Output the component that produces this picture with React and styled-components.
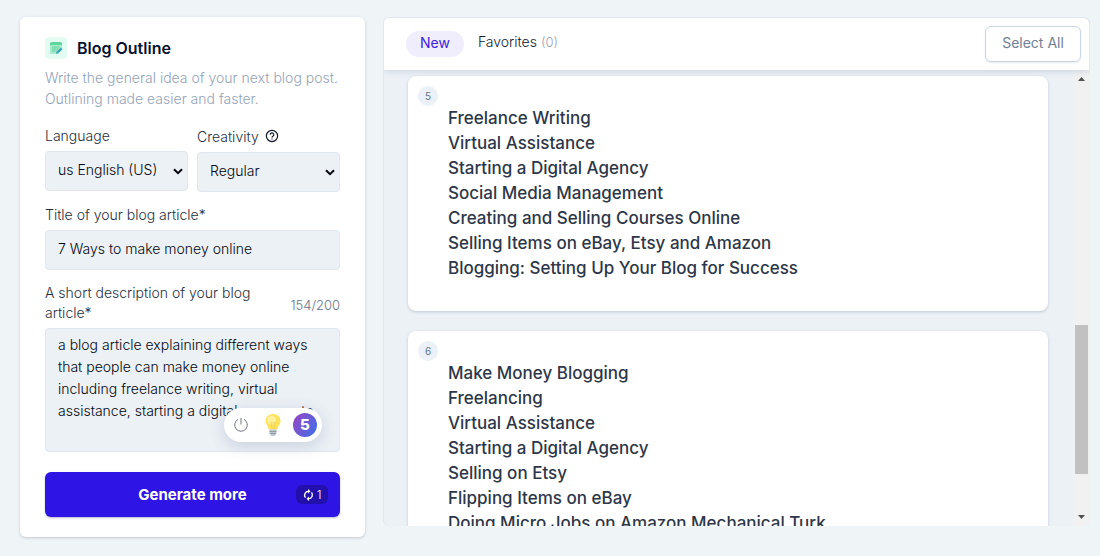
import React from "react";
import styled, { createGlobalStyle } from "styled-components";

const Global = createGlobalStyle`
  *, *::before, *::after { box-sizing: border-box; }
  body {
    margin: 0;
    background: #eff4f7;
    color: #030712;
    font-family: "Inter", "Liberation Sans", sans-serif;
    font-size: 14px;
    line-height: 20px;
  }
  button, input, select, textarea { font: inherit; color: inherit; margin: 0; }
  h1, h2, p, ul { margin: 0; padding: 0; }
`;

const Page = styled.main`
  display: grid;
  grid-template-columns: 345px minmax(0, 1fr);
  gap: 18px;
  align-items: start;
  padding: 17px 10px 19px 20px;
`;

const FormCard = styled.form`
  padding: 20px 25px;
  background: #fff;
  border-radius: 6px;
  box-shadow: 0 1px 3px rgba(30, 50, 80, 0.22);
`;

const TitleRow = styled.header`
  display: flex;
  align-items: center;
  gap: 10px;
  height: 22px;
`;

const ToolIcon = styled.svg`
  width: 22px;
  height: 22px;
`;

const Title = styled.h1`
  font-size: 16px;
  font-weight: 600;
  color: #07112e;
`;

const Intro = styled.p`
  margin-top: 8px;
  line-height: 21px;
  font-weight: 300;
  color: #94a3b8;
`;

const Columns = styled.div`
  display: grid;
  grid-template-columns: 1fr 1fr;
  gap: 9px;
  margin-top: 17px;
`;

const Field = styled.div`
  margin-top: ${(p) => (p.$spaced ? "13px" : "0")};
`;

const LabelRow = styled.div`
  display: flex;
  align-items: center;
  justify-content: space-between;
  gap: 24px;
  margin-bottom: 5px;
`;

const Label = styled.label`
  display: flex;
  align-items: center;
  gap: 6px;
  font-weight: 300;
  color: #27303f;
`;

const Counter = styled.span`
  padding-top: 4px;
  font-size: 13px;
  font-weight: 300;
  color: #64748b;
`;

const controlLook = `
  display: block;
  width: 100%;
  background: #ecf1f5;
  border: 1px solid #dfe6ed;
  border-radius: 4px;
  font-weight: 300;
  outline: none;
`;

const SelectBox = styled.div`
  display: grid;
  align-items: center;
`;

const Select = styled.select`
  ${controlLook}
  grid-area: 1 / 1;
  height: 40px;
  padding: 0 20px 2px 12px;
  appearance: none;
`;

const Chevron = styled.svg`
  grid-area: 1 / 1;
  justify-self: end;
  width: 10px;
  height: 7px;
  margin-right: 5px;
  pointer-events: none;
`;

const Input = styled.input`
  ${controlLook}
  height: 40px;
  padding: 0 12px 4px;
`;

const AreaWrap = styled.div`
  position: relative;
`;

const TextArea = styled.textarea`
  ${controlLook}
  height: 124px;
  padding: 5px 12px;
  line-height: 22px;
  resize: none;
  overflow: hidden;
`;

const Assistant = styled.div`
  position: absolute;
  right: 18px;
  bottom: 10px;
  display: flex;
  align-items: center;
  gap: 12px;
  width: 98px;
  height: 34px;
  padding-left: 9px;
  background: #fff;
  border-radius: 17px;
  box-shadow: 0 4px 16px rgba(60, 70, 130, 0.2);
`;

const Power = styled.svg`
  width: 16px;
  height: 16px;
  flex: none;
`;

const Bulb = styled.svg`
  width: 22px;
  height: 24px;
  flex: none;
`;

const Score = styled.span`
  display: grid;
  place-items: center;
  flex: none;
  width: 24px;
  height: 24px;
  margin-left: -2px;
  border-radius: 50%;
  background: linear-gradient(120deg, #9747c4 5%, #3f6fe8 95%);
  color: #fff;
  font-size: 15px;
  font-weight: 800;
`;

const Generate = styled.button`
  display: grid;
  grid-template-columns: 1fr auto 1fr;
  align-items: center;
  width: 100%;
  height: 45px;
  margin-top: 20px;
  padding: 0 12px;
  border: 0;
  border-radius: 6px;
  background: #2e15e6;
  box-shadow: 0 1px 2px rgba(20, 20, 80, 0.3);
  color: #fff;
  font-size: 15px;
  font-weight: 700;
`;

const GenerateText = styled.span`
  grid-column: 2;
`;

const Credits = styled.span`
  justify-self: end;
  display: flex;
  align-items: center;
  justify-content: center;
  gap: 3px;
  width: 32px;
  height: 19px;
  border-radius: 6px;
  background: #220fac;
  font-size: 12px;
  font-weight: 300;
`;

const Results = styled.section`
  display: flex;
  flex-direction: column;
  height: calc(100vh - 47px);
  border: 1px solid #e2e8ef;
  border-width: 1px 0 0 1px;
  border-radius: 6px;
  overflow: hidden;
  background: #ecf1f6;
`;

const Toolbar = styled.header`
  position: relative;
  display: flex;
  align-items: center;
  gap: 14px;
  flex: none;
  height: 52px;
  padding: 0 8px 0 22px;
  background: #fff;
  border-radius: 0 6px 0 0;
  border-right: 1px solid #e2e8ef;
  box-shadow: 0 1px 6px rgba(100, 125, 170, 0.28);
`;

const Tab = styled.button`
  height: 26px;
  padding: ${(p) => (p.$active ? "0 14px 2px" : "0 0 4px")};
  border: 0;
  border-radius: 13px;
  background: ${(p) => (p.$active ? "#f0edfd" : "none")};
  color: ${(p) => (p.$active ? "#4021e0" : "#111c30")};
  font-weight: ${(p) => (p.$active ? 400 : 300)};
`;

const TabCount = styled.span`
  font-size: 13px;
  color: #94a3b8;
`;

const SelectAll = styled.button`
  height: 36px;
  width: 96px;
  margin-left: auto;
  padding: 0 0 2px;
  border: 1px solid #cbd5e1;
  border-radius: 6px;
  background: #fff;
  box-shadow: 0 1px 2px rgba(30, 50, 80, 0.1);
  color: #718096;
`;

const Body = styled.div`
  display: flex;
  flex: 1;
  min-height: 0;
`;

const List = styled.div`
  flex: 1;
  min-width: 0;
  padding: 6px 25px 0 24px;
  overflow: hidden;
`;

const OutlineCard = styled.article`
  display: grid;
  grid-template-columns: 20px minmax(0, 1fr);
  gap: 10px;
  padding: 10px 10px 30px;
  margin-bottom: 20px;
  background: #fff;
  border-radius: 8px;
  box-shadow: 0 1px 3px rgba(30, 50, 80, 0.22);
`;

const Badge = styled.span`
  display: grid;
  place-items: center;
  width: 20px;
  height: 20px;
  border-radius: 50%;
  background: #ebf1f6;
  color: #64748b;
  font-size: 10px;
`;

const Lines = styled.ul`
  padding-top: 20px;
  list-style: none;
  color: #2d3748;
  font-size: 17px;
  font-weight: 500;
  line-height: 25px;
`;

const Scrollbar = styled.div`
  display: flex;
  flex-direction: column;
  align-items: center;
  width: 17px;
  padding: 6px 2px;
  background: #f1f1f1;
`;

const Spacer = styled.span`
  flex: ${(p) => p.$grow};
`;

const Thumb = styled.span`
  flex: 149;
  width: 13px;
  background: #c1c1c1;
`;

const Arrow = styled.svg`
  width: 7px;
  height: 6px;
  flex: none;
`;

const outlines = [
  {
    id: 5,
    lines: [
      "Freelance Writing",
      "Virtual Assistance",
      "Starting a Digital Agency",
      "Social Media Management",
      "Creating and Selling Courses Online",
      "Selling Items on eBay, Etsy and Amazon",
      "Blogging: Setting Up Your Blog for Success",
    ],
  },
  {
    id: 6,
    lines: [
      "Make Money Blogging",
      "Freelancing",
      "Virtual Assistance",
      "Starting a Digital Agency",
      "Selling on Etsy",
      "Flipping Items on eBay",
      "Doing Micro Jobs on Amazon Mechanical Turk",
    ],
  },
];

const description =
  "a blog article explaining different ways that people can make money online including freelance writing, virtual assistance, starting a digital agency etc.";

function Dropdown({ id, value }) {
  return (
    <SelectBox>
      <Select id={id} defaultValue={value}>
        <option>{value}</option>
      </Select>
      <Chevron viewBox="0 0 10 7" aria-hidden="true">
        <path d="M1 1.2 5 5.2 9 1.2" fill="none" stroke="#050510" strokeWidth="2" />
      </Chevron>
    </SelectBox>
  );
}

function HelpIcon() {
  return (
    <svg width="14" height="21" viewBox="0 -3 14 21" fill="none" stroke="#111827" strokeWidth="1.2" aria-hidden="true">
      <circle cx="7" cy="7" r="5.6" />
      <path d="M5.2 5.7a1.8 1.8 0 1 1 2.7 1.5c-.6.4-.9.6-.9 1.2M7 9.4v1.1" />
    </svg>
  );
}

export default function App() {
  return (
    <>
      <Global />
      <Page>
        <FormCard onSubmit={(e) => e.preventDefault()}>
          <TitleRow>
            <ToolIcon viewBox="0 0 22 22" aria-hidden="true">
              <rect width="22" height="22" rx="4" fill="#e3fcf1" />
              <path d="M5 6.5A1.5 1.5 0 0 1 6.5 5h9A1.5 1.5 0 0 1 17 6.500V8H5z" fill="#5fd6a0" />
              <path d="M5 8h12v5l-4 4H6.500A1.500 1.500 0 0 1 5 15.500z" fill="#a5edca" />
              <path d="M7 10h7.500M7 12h6M7 14h3.500" stroke="#62cf9f" fill="none" />
              <path d="m11 16.800.5-2.300 4.300-4 1.700 1.700-4.300 4z" fill="#3fa5b5" />
            </ToolIcon>
            <Title>Blog Outline</Title>
          </TitleRow>
          <Intro>Write the general idea of your next blog post. Outlining made easier and faster.</Intro>

          <Columns>
            <Field>
              <LabelRow>
                <Label htmlFor="language">Language</Label>
              </LabelRow>
              <Dropdown id="language" value={"us\u00a0English (US)"} />
            </Field>
            <Field>
              <LabelRow>
                <Label htmlFor="creativity">
                  Creativity <HelpIcon />
                </Label>
              </LabelRow>
              <Dropdown id="creativity" value="Regular" />
            </Field>
          </Columns>

          <Field $spaced>
            <LabelRow>
              <Label htmlFor="title">Title of your blog article*</Label>
            </LabelRow>
            <Input id="title" type="text" defaultValue="7 Ways to make money online" />
          </Field>

          <Field $spaced>
            <LabelRow>
              <Label htmlFor="description">A short description of your blog article*</Label>
              <Counter>154/200</Counter>
            </LabelRow>
            <AreaWrap>
              <TextArea id="description" spellCheck={false} defaultValue={description} />
              <Assistant>
                <Power viewBox="0 0 16 16" fill="none" stroke="#717785" aria-hidden="true">
                  <path d="M5 2.400a6.300 6.300 0 1 0 6 0M8 1v6.500" />
                </Power>
                <Bulb viewBox="-3 0 22 24" aria-hidden="true">
                  <path d="M9 1C4.500 1 1.500 4 1.500 8c0 3.200 2.500 4.800 3.300 8.500h8.400C14 12.800 16.500 11.200 16.500 8c0-4-3-7-7.500-7z" fill="#fde25a" />
                  <ellipse cx="7.500" cy="7" rx="4.500" ry="4.500" fill="#fff09a" />
                  <path d="m7 9 1 7m3-7-1 7M6.500 8.800 9 10l2.500-1.200" fill="none" stroke="#e8c94e" strokeWidth=".6" />
                  <path d="M5.500 16.500h7v4L10.500 23h-3l-2-2.500z" fill="#bcc4ce" />
                  <path d="M5.500 18.500h7M6 20.500h6" stroke="#808b99" strokeWidth=".7" />
                </Bulb>
                <Score>5</Score>
              </Assistant>
            </AreaWrap>
          </Field>

          <Generate type="submit">
            <GenerateText>Generate more</GenerateText>
            <Credits>
              <svg width="11" height="12" viewBox="0 0 11 12" aria-hidden="true">
                <path d="M5.500 2.200A3.900 3.900 0 0 0 2.500 8.600M5.500 9.800A3.900 3.900 0 0 0 8.500 3.400" fill="none" stroke="#fff" strokeWidth="1.400" />
                <path d="M5 0v4.400l2.500-2.200zM6 12V7.600L3.500 9.800z" fill="#fff" />
              </svg>
              1
            </Credits>
          </Generate>
        </FormCard>

        <Results>
          <Toolbar>
            <Tab type="button" $active>New</Tab>
            <Tab type="button">
              Favorites <TabCount>(0)</TabCount>
            </Tab>
            <SelectAll type="button">Select All</SelectAll>
          </Toolbar>
          <Body>
            <List>
              {outlines.map((o) => (
                <OutlineCard key={o.id}>
                  <Badge>{o.id}</Badge>
                  <Lines>
                    {o.lines.map((line) => (
                      <li key={line}>{line}</li>
                    ))}
                  </Lines>
                </OutlineCard>
              ))}
            </List>
            <Scrollbar aria-hidden="true">
              <Arrow viewBox="0 0 7 6"><path d="M0 5h7L3.500 1z" fill="#505050" /></Arrow>
              <Spacer $grow={243} />
              <Thumb />
              <Spacer $grow={40} />
              <Arrow viewBox="0 0 7 6"><path d="M0 1h7L3.500 5z" fill="#505050" /></Arrow>
            </Scrollbar>
          </Body>
        </Results>
      </Page>
    </>
  );
}
